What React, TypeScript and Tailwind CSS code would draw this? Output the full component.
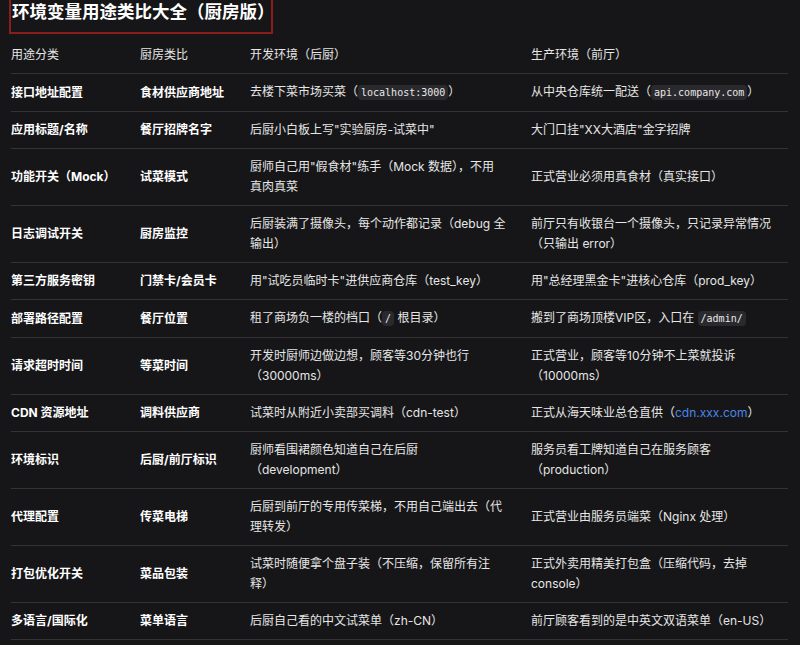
import type { ReactNode } from 'react';

const Code = ({ children }: { children: ReactNode }) => (
  <code className="rounded-[4px] bg-[#2a2a2e] px-[3px] py-[2px] font-['DejaVu_Sans_Mono',monospace] text-[10px] text-[#e8e8e8]">
    {children}
  </code>
);

interface Row {
  use: string;
  kitchen: string;
  dev: ReactNode;
  prod: ReactNode;
}

const rows: Row[] = [
  {
    use: '接口地址配置',
    kitchen: '食材供应商地址',
    dev: <>去楼下菜市场买菜（<Code>localhost:3000</Code>）</>,
    prod: <>从中央仓库统一配送（<Code>api.company.com</Code>）</>,
  },
  {
    use: '应用标题/名称',
    kitchen: '餐厅招牌名字',
    dev: '后厨小白板上写"实验厨房-试菜中"',
    prod: '大门口挂"XX大酒店"金字招牌',
  },
  {
    use: '功能开关（Mock）',
    kitchen: '试菜模式',
    dev: '厨师自己用"假食材"练手（Mock 数据），不用真肉真菜',
    prod: '正式营业必须用真食材（真实接口）',
  },
  {
    use: '日志调试开关',
    kitchen: '厨房监控',
    dev: '后厨装满了摄像头，每个动作都记录（debug 全输出）',
    prod: '前厅只有收银台一个摄像头，只记录异常情况（只输出 error）',
  },
  {
    use: '第三方服务密钥',
    kitchen: '门禁卡/会员卡',
    dev: '用"试吃员临时卡"进供应商仓库（test_key）',
    prod: '用"总经理黑金卡"进核心仓库（prod_key）',
  },
  {
    use: '部署路径配置',
    kitchen: '餐厅位置',
    dev: <>租了商场负一楼的档口（<Code>/</Code> 根目录）</>,
    prod: <>搬到了商场顶楼VIP区，入口在 <Code>/admin/</Code></>,
  },
  {
    use: '请求超时时间',
    kitchen: '等菜时间',
    dev: '开发时厨师边做边想，顾客等30分钟也行（30000ms）',
    prod: '正式营业，顾客等10分钟不上菜就投诉（10000ms）',
  },
  {
    use: 'CDN 资源地址',
    kitchen: '调料供应商',
    dev: '试菜时从附近小卖部买调料（cdn-test）',
    prod: <>正式从海天味业总仓直供（<span className="text-[#4a86e8]">cdn.xxx.com</span>）</>,
  },
  {
    use: '环境标识',
    kitchen: '后厨/前厅标识',
    dev: '厨师看围裙颜色知道自己在后厨（development）',
    prod: '服务员看工牌知道自己在服务顾客（production）',
  },
  {
    use: '代理配置',
    kitchen: '传菜电梯',
    dev: '后厨到前厅的专用传菜梯，不用自己端出去（代理转发）',
    prod: '正式营业由服务员端菜（Nginx 处理）',
  },
  {
    use: '打包优化开关',
    kitchen: '菜品包装',
    dev: '试菜时随便拿个盘子装（不压缩，保留所有注释）',
    prod: '正式外卖用精美打包盒（压缩代码，去掉 console）',
  },
  {
    use: '多语言/国际化',
    kitchen: '菜单语言',
    dev: '后厨自己看的中文试菜单（zh-CN）',
    prod: '前厅顾客看到的是中英文双语菜单（en-US）',
  },
];

const cols = 'grid grid-cols-[129px_110px_281px_257px] border-b border-[#333336]';
const cell = 'flex items-center py-2 pr-4';
const devCell = 'flex items-center py-2 pr-[25px]';
const prodCell = 'flex items-center py-2 pr-3';

export default function App() {
  return (
    <div className="min-h-[645px] w-[800px] overflow-hidden bg-[#161618] font-['Inter','Noto_Sans_CJK_SC',sans-serif] text-xs leading-5 text-[#e6e6e6]">
      <div className="ml-[9px] w-[264px] border-x-2 border-b-2 border-[#8b1c1c] pb-2 pl-px">
        <h1 className="whitespace-nowrap text-[17.5px] leading-6 font-bold text-white">环境变量用途类比大全（厨房版）</h1>
      </div>

      <div className="ml-[11px] mt-[3px] w-[777px]">
        <div className={cols}>
          <div className={cell}>用途分类</div>
          <div className={cell}>厨房类比</div>
          <div className={devCell}>开发环境（后厨）</div>
          <div className={prodCell}>生产环境（前厅）</div>
        </div>
        {rows.map((row) => (
          <div key={row.use} className={cols}>
            <div className={`${cell} font-bold text-white`}>{row.use}</div>
            <div className={`${cell} font-bold text-white`}>{row.kitchen}</div>
            <div className={devCell}>
              <p>{row.dev}</p>
            </div>
            <div className={prodCell}>
              <p>{row.prod}</p>
            </div>
          </div>
        ))}
      </div>
    </div>
  );
}
